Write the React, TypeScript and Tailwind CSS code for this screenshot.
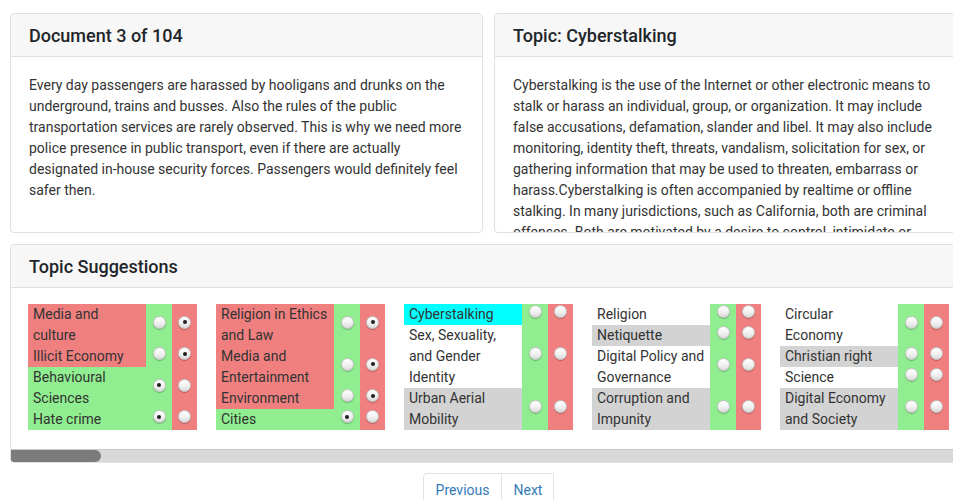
import React from "react";

type Tone = "red" | "green" | "cyan" | "gray" | "white";
type Pick = "green" | "red" | null;

interface Suggestion {
  lines: string[];
  tone: Tone;
  pick: Pick;
}

const toneClass: Record<Tone, string> = {
  red: "bg-[#f08080]",
  green: "bg-[#90ee90]",
  cyan: "bg-[#00ffff]",
  gray: "bg-[#d3d3d3]",
  white: "bg-white",
};

const groups: Suggestion[][] = [
  [
    { lines: ["Media and", "culture"], tone: "red", pick: "red" },
    { lines: ["Illicit Economy"], tone: "red", pick: "red" },
    { lines: ["Behavioural", "Sciences"], tone: "green", pick: "green" },
    { lines: ["Hate crime"], tone: "green", pick: "green" },
  ],
  [
    { lines: ["Religion in Ethics", "and Law"], tone: "red", pick: "red" },
    { lines: ["Media and", "Entertainment"], tone: "red", pick: "red" },
    { lines: ["Environment"], tone: "red", pick: "red" },
    { lines: ["Cities"], tone: "green", pick: "green" },
  ],
  [
    { lines: ["Cyberstalking"], tone: "cyan", pick: null },
    { lines: ["Sex, Sexuality,", "and Gender", "Identity"], tone: "white", pick: null },
    { lines: ["Urban Aerial", "Mobility"], tone: "gray", pick: null },
  ],
  [
    { lines: ["Religion"], tone: "white", pick: null },
    { lines: ["Netiquette"], tone: "gray", pick: null },
    { lines: ["Digital Policy and", "Governance"], tone: "white", pick: null },
    { lines: ["Corruption and", "Impunity"], tone: "gray", pick: null },
  ],
  [
    { lines: ["Circular", "Economy"], tone: "white", pick: null },
    { lines: ["Christian right"], tone: "gray", pick: null },
    { lines: ["Science"], tone: "white", pick: null },
    { lines: ["Digital Economy", "and Society"], tone: "gray", pick: null },
  ],
];

const documentText =
  "Every day passengers are harassed by hooligans and drunks on the underground, trains and busses. Also the rules of the public transportation services are rarely observed. This is why we need more police presence in public transport, even if there are actually designated in-house security forces. Passengers would definitely feel safer then.";

const topicText =
  "Cyberstalking is the use of the Internet or other electronic means to stalk or harass an individual, group, or organization. It may include false accusations, defamation, slander and libel. It may also include monitoring, identity theft, threats, vandalism, solicitation for sex, or gathering information that may be used to threaten, embarrass or harass.Cyberstalking is often accompanied by realtime or offline stalking. In many jurisdictions, such as California, both are criminal offenses. Both are motivated by a desire to control, intimidate or influence a victim. A stalker may be an online stranger or a person whom the target knows.";

function Radio({ checked }: { checked: boolean }) {
  return (
    <span className="mb-[6px] flex h-[13px] w-[13px] items-center justify-center rounded-full border border-[#c4c4c4] bg-[linear-gradient(180deg,#ffffff_0%,#f1f1f1_55%,#d9d9d9_100%)] shadow-[0_1px_1px_rgba(0,0,0,0.25)]">
      {checked && <span className="h-[4px] w-[4px] rounded-full bg-[#1f1f1f]" />}
    </span>
  );
}

function CardHeader({ title }: { title: string }) {
  return (
    <div className="flex h-[43px] shrink-0 items-center border-b border-[#e0e0e0] bg-[#f7f7f7] px-[18px]">
      <h2 className="text-[18px] font-medium text-[#212529]">{title}</h2>
    </div>
  );
}

function SuggestionGroup({ items }: { items: Suggestion[] }) {
  return (
    <div className="grid shrink-0 grid-cols-[118px_26px_25px]">
      {items.map((item, i) => (
        <React.Fragment key={i}>
          <div className={`${toneClass[item.tone]} whitespace-nowrap pl-[5px] text-[14px] leading-[21px] text-[#333]`}>
            {item.lines.map((line, j) => (
              <div key={j}>{line}</div>
            ))}
          </div>
          <div className="flex items-center justify-center bg-[#90ee90]">
            <Radio checked={item.pick === "green"} />
          </div>
          <div className="flex items-center justify-center bg-[#f08080]">
            <Radio checked={item.pick === "red"} />
          </div>
        </React.Fragment>
      ))}
    </div>
  );
}

export default function App() {
  return (
    <div className="h-[500px] w-[953px] overflow-hidden bg-white font-['Roboto',_'Liberation_Sans',_sans-serif] text-[#333]">
      <div className="ml-[10px] w-[957px] pt-[13px]">
        <div className="flex gap-[11px]">
          <section className="flex h-[220px] w-[473px] flex-col overflow-hidden rounded-[4px] border border-[#e0e0e0] bg-white">
            <CardHeader title="Document 3 of 104" />
            <p className="px-[18px] pt-[18px] text-[14px] leading-[21px]">{documentText}</p>
          </section>
          <section className="flex h-[220px] w-[473px] flex-col overflow-hidden rounded-[4px] border border-[#e0e0e0] bg-white">
            <CardHeader title="Topic: Cyberstalking" />
            <p className="px-[18px] pt-[18px] text-[14px] leading-[21px]">{topicText}</p>
          </section>
        </div>

        <section className="mt-[11px] overflow-hidden rounded-[4px] border border-[#e0e0e0] bg-white">
          <CardHeader title="Topic Suggestions" />
          <div className="flex gap-[19px] overflow-hidden pb-[19px] pl-[17px] pt-[16px]">
            {groups.map((items, i) => (
              <SuggestionGroup key={i} items={items} />
            ))}
          </div>
          <div className="h-[13px] border-t border-[#c8c8c8] bg-[#d9d9d9]">
            <div className="h-full w-[90px] rounded-r-[6px] bg-[#7b7b7b]" />
          </div>
        </section>

        <nav className="mt-[10px] flex justify-center">
          <div className="flex rounded-l-[4px] border border-[#dee2e6] text-[14px] leading-[21px] text-[#337ab7]">
            <span className="px-[12px] py-[6px]">Previous</span>
            <span className="border-l border-[#dee2e6] px-[11px] py-[6px]">Next</span>
          </div>
        </nav>
      </div>
    </div>
  );
}
